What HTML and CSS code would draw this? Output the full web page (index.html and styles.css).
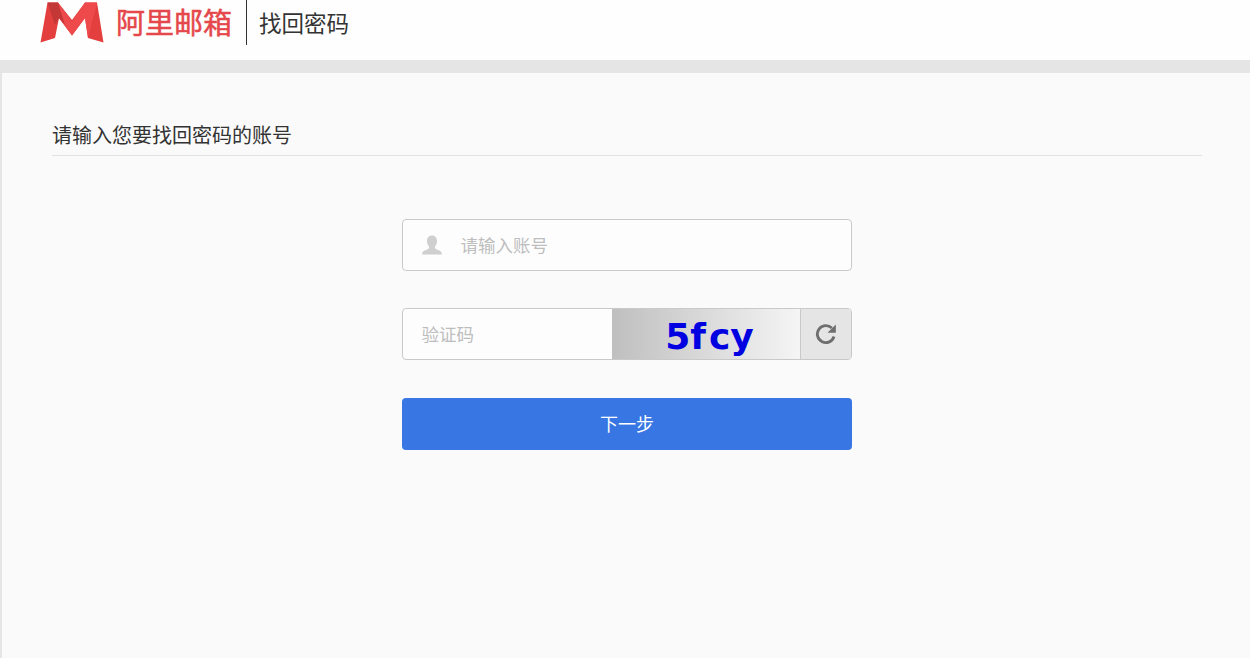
FILE: index.html
```html
<!DOCTYPE html>
<html lang="zh-CN">
<head>
<meta charset="utf-8">
<title>找回密码</title>
<link rel="stylesheet" href="styles.css">
</head>
<body>
<header class="header">
  <svg class="logo-mark" width="66" height="44" viewBox="0 0 66 44">
    <path fill="#e33f3f" d="M8.500 2.500H19L33 20L46 2.500H58L64.500 42.500L49 38L46 18L33 35.500L20 18L16 38L1.500 42.500Z"/>
    <path fill="#ee4a4c" d="M19 2.500L33 22L46 2.500H58L49 38L46 18L33 35.500L20 18Z"/>
    <path fill="#c43737" d="M8.500 2.500H19L26 25L20 18L16 25Z"/>
  </svg>
  <span class="logo-text">阿里邮箱</span>
  <span class="divider"></span>
  <h1 class="page-title">找回密码</h1>
</header>
<main class="panel">
  <h2 class="section-title">请输入您要找回密码的账号</h2>
  <form class="form">
    <div class="field account">
      <svg class="user-icon" width="22" height="22" viewBox="0 0 22 22">
        <path fill="#cfcfcf" d="M11 1.500C14.500 1.500 16 4 16 7C16 9.500 15 11.500 13.800 13C13.600 14.300 14.500 15 16.500 15.700C19 16.500 21 17.500 21 20.500H1C1 17.500 3 16.500 5.500 15.700C7.500 15 8.400 14.300 8.200 13C7 11.500 6 9.500 6 7C6 4 7.500 1.500 11 1.500Z"/>
      </svg>
      <span class="placeholder">请输入账号</span>
    </div>
    <div class="field captcha">
      <span class="placeholder code">验证码</span>
      <div class="captcha-image"><span>5f</span><span>cy</span></div>
      <div class="refresh">
        <svg width="24" height="24" viewBox="0 0 24 24">
          <path fill="none" stroke="#6e6e6e" stroke-width="2.800" d="M20 14.500A8.500 8.500 0 1 1 17.800 6"/>
          <path fill="#6e6e6e" d="M21.800 2.500V10.800H13.500Z"/>
        </svg>
      </div>
    </div>
    <button class="submit" type="button">下一步</button>
  </form>
</main>
</body>
</html>
```
FILE: styles.css
```css
* { box-sizing: border-box; }
html, body { height: 100%; }
body {
  margin: 0;
  display: flex;
  flex-direction: column;
  height: 658px;
  overflow: hidden;
  background: #e5e5e5;
  font-family: "Noto Sans CJK SC", "Liberation Sans", sans-serif;
}
.header {
  height: 60px;
  flex: none;
  display: flex;
  align-items: flex-start;
  padding-left: 39px;
  background: #fefefe;
}
.logo-mark { flex: none; }
.logo-text {
  margin-left: 11px;
  margin-top: -1px;
  font-size: 29px;
  line-height: 44px;
  color: #e5474b;
  -webkit-text-stroke: 0.5px #e5474b;
  white-space: nowrap;
}
.divider {
  width: 1px;
  height: 45px;
  margin-left: 14px;
  background: #333;
}
.page-title {
  margin: 0 0 0 12px;
  font-size: 22.500px;
  font-weight: 400;
  line-height: 44px;
  color: #333;
  white-space: nowrap;
}
.panel {
  flex: 1;
  margin: 13px 0 0 2px;
  padding: 47px 48px 0 50px;
  background: #fafafa;
}
.section-title {
  margin: 0;
  height: 36px;
  font-size: 20px;
  font-weight: 400;
  line-height: 30px;
  color: #333;
  border-bottom: 1px solid #e2e2e2;
}
.form {
  width: 450px;
  margin: 63px 0 0 350px;
  display: flex;
  flex-direction: column;
}
.field {
  height: 52px;
  display: flex;
  align-items: center;
  border: 1px solid #c9c9c9;
  border-radius: 4px;
  background: #fdfdfd;
  overflow: hidden;
}
.account { padding-left: 18px; }
.placeholder {
  margin-top: -2px;
  font-size: 17.500px;
  color: #bdbdbd;
  white-space: nowrap;
}
.user-icon { flex: none; }
.account .placeholder { margin-left: 17.500px; }
.captcha { margin-top: 37px; }
.code { width: 209px; padding-left: 18.500px; flex: none; }
.captcha-image {
  width: 188px;
  height: 100%;
  flex: none;
  display: flex;
  align-items: center;
  justify-content: center;
  gap: 3px;
  padding: 5px 0 0 7px;
  background: linear-gradient(90deg, #bfbfbf, #f5f5f5);
  font-family: "DejaVu Sans", sans-serif;
  font-weight: 700;
  font-size: 36px;
  line-height: 44px;
  color: #0000e0;
}
.refresh {
  flex: 1;
  height: 100%;
  display: flex;
  align-items: center;
  justify-content: center;
  background: #e5e5e5;
  border-left: 1px solid #c9c9c9;
}
.submit {
  height: 52px;
  margin-top: 38px;
  padding: 0 0 2px;
  border: 0;
  border-radius: 4px;
  background: #3876e4;
  color: #fff;
  font-family: inherit;
  font-size: 18px;
  cursor: pointer;
}
```
